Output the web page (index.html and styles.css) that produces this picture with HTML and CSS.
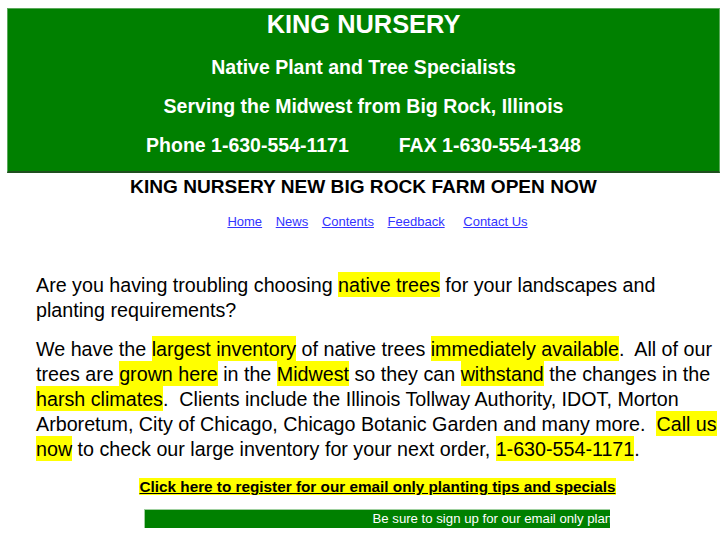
FILE: index.html
```html
<!DOCTYPE html>
<html>
<head>
<meta charset="utf-8">
<title>King Nursery</title>
<link rel="stylesheet" href="styles.css">
</head>
<body>
<div class="header">
  <div class="title">KING NURSERY</div>
  <div class="sub sub1">Native Plant and Tree Specialists</div>
  <div class="sub">Serving the Midwest from Big Rock, Illinois</div>
  <div class="sub phone"><span>Phone 1-630-554-1171</span><span class="fax">FAX 1-630-554-1348</span></div>
</div>
<div class="news">KING NURSERY NEW BIG ROCK FARM OPEN NOW</div>
<nav class="nav">
  <a href="#">Home</a>
  <a href="#">News</a>
  <a href="#">Contents</a>
  <a href="#">Feedback</a>
  <a href="#" class="contact">Contact Us</a>
</nav>
<div class="content">
  <p>Are you having troubling choosing <span class="hl">native trees</span> for your landscapes and planting requirements?</p>
  <p>We have the <span class="hl">largest inventory</span> of native trees <span class="hl">immediately available</span>.&nbsp; All of our trees are <span class="hl">grown here</span> in the <span class="hl">Midwest</span> so they can <span class="hl">withstand</span> the changes in the <span class="hl">harsh climates</span>.&nbsp; Clients include the Illinois Tollway Authority, IDOT, Morton Arboretum, City of Chicago, Chicago Botanic Garden and many more.&nbsp; <span class="hl">Call us now</span> to check our large inventory for your next order, <span class="hl">1-630-554-1171</span>.</p>
</div>
<div class="register"><a href="#">Click here to register for our email only planting tips and specials</a></div>
<div class="ticker"><span>Be sure to sign up for our email only planting tips and specials</span></div>
</body>
</html>
```
FILE: styles.css
```css
html, body {
  margin: 0;
  padding: 0;
  background: #ffffff;
}
body {
  font-family: "Liberation Sans", Arial, Helvetica, sans-serif;
  color: #000000;
}
.header {
  margin: 8px 7px 0 7px;
  height: 162px;
  background: #008000;
  border: 1px solid #5aa85a;
  border-bottom: 2px solid #1f4f1f;
  color: #ffffff;
  font-weight: bold;
  text-align: center;
}
.title {
  font-size: 25.4px;
  line-height: 30px;
  padding-top: 0;
}
.sub {
  font-size: 19.5px;
  line-height: 22px;
  margin-top: 17px;
}
.sub1 {
  margin-top: 17px;
}
.fax {
  margin-left: 50px;
}
.news {
  text-align: center;
  font-weight: bold;
  font-size: 19.1px;
  line-height: 24px;
  margin-top: 2px;
}
.nav {
  text-align: center;
  font-size: 13px;
  line-height: 16px;
  margin-top: 15px;
  padding-left: 28px;
}
.nav a {
  color: #3333ff;
  margin: 0 5px;
}
.nav a.contact {
  margin-left: 10px;
}
.content {
  padding: 0 5px 0 36px;
  margin-top: 43px;
  font-size: 19.7px;
  line-height: 25px;
}
.content p {
  margin: 0 0 14px 0;
}
.hl {
  background: #ffff00;
  padding: 2px 0 1px 0;
}
.register {
  text-align: center;
  font-size: 15.3px;
  line-height: 18px;
  font-weight: bold;
  margin-top: 16px;
  padding-left: 28px;
}
.register a {
  color: #000000;
  background: #ffff00;
}
.ticker {
  margin: 13px auto 0 auto;
  width: 465px;
  height: 18px;
  background: #008000;
  border-left: 1px solid #9fd09f;
  border-top: 1px solid #9fd09f;
  overflow: hidden;
  white-space: nowrap;
  color: #ffffff;
  font-size: 13.2px;
  line-height: 18px;
  position: relative;
  left: 13px;
}
.ticker span {
  display: inline-block;
  padding-left: 228px;
}
```
